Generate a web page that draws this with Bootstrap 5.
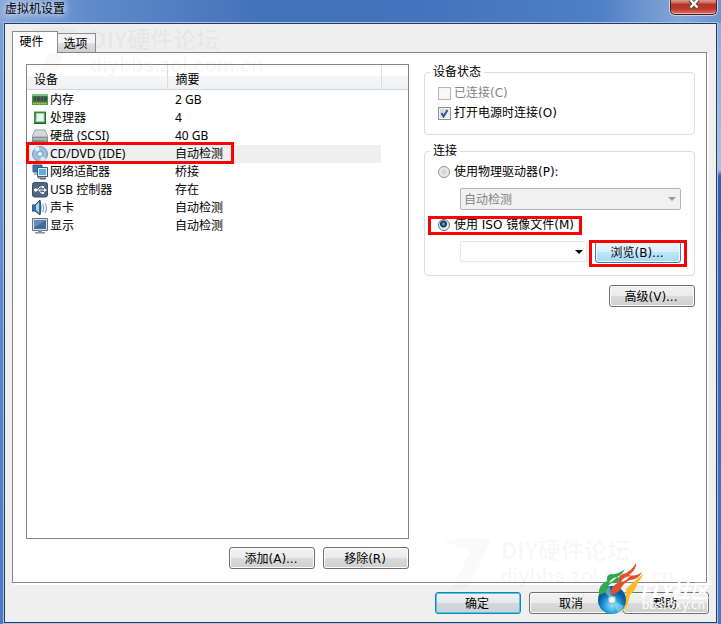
<!DOCTYPE html>
<html lang="zh-CN">
<head>
<meta charset="utf-8">
<meta name="viewport" content="width=device-width, initial-scale=1">
<title>虚拟机设置</title>
<link href="https://cdn.jsdelivr.net/npm/bootstrap@5.3.0/dist/css/bootstrap.min.css" rel="stylesheet">
<style>
  body { font: 12px/18px "DejaVu Sans", "Noto Sans CJK SC", sans-serif; color: #000; background: #4676bd; }
  .win { min-height: 100vh; padding: 0 4px 1px;
    background: linear-gradient(90deg, #86a9da 0, #5f8bcb 90px, #4472b9 260px, #4273bc 420px, #4e80c6 600px, #86a6d6 680px, #6d95cd 100%) 0 0 / 100% 23px no-repeat,
      linear-gradient(180deg, #8aabdc 0, #a8c0e4 170px, #2f5fae 176px, #4a7ac2 100%) 100% 0 / 5px 100% no-repeat,
      linear-gradient(180deg, #7ea3d8 0, #5c88cc 50%, #4a7ac4 100%); }
  .title-bar { height: 23px; }
  .title-text { font: 12px/16px "Noto Sans CJK SC", sans-serif; padding-left: 1px; text-shadow: 0 0 6px #fff, 0 0 10px #dfeaf8; }
  .close-btn { width: 47px; height: 15px; border: 1px solid #4b1d22; border-top: 0; border-radius: 0 0 5px 5px;
    background: linear-gradient(#d99a90 0, #cc6a5c 3px, #b53424 4px, #bb3b2c 9px, #d97462 100%); box-shadow: 0 0 0 1px #c5d3ea, inset 0 -1px 0 #efb0a3; }
  .dialog { background: #efefef; border: 1px solid #243a5e; box-shadow: 0 0 0 1px #a9c4e6; padding: 7px 9px 7px 7px; }
  .tab-strip { height: 21px; z-index: 2; }
  .tab-btn { border: 1px solid #898c95; border-bottom: 0; width: 39px; height: 19px; padding: 2px 6px 0 4px; line-height: 17px; white-space: nowrap;
    background: linear-gradient(#f3f3f3 0 50%, #dfdfdf 50%, #cfcfcf); margin-left: -1px; }
  .tab-btn.active { width: 46px; height: 22px; margin: 0 0 -1px; padding: 0 7px 0 0; background: #fff; }
  .pane { border: 1px solid #85878f; background: #fff; box-shadow: 2px 2px 0 #fff; padding: 11px 11px 13px 13px; }
  .hw-side { flex: 0 1 383px; }
  .opt-side { flex: 1 1 271px; margin-left: 15px; }
  .hw-list { border: 1px solid #828790; background: #fff; margin-bottom: 8px; }
  .hw-table { width: 100%; table-layout: fixed; border-collapse: collapse; font-family: "Noto Sans", "Noto Sans CJK SC", sans-serif; }
  .hw-table th { height: 24px; padding: 6px 7px 0; line-height: 17px; font-weight: 400; border-right: 1px solid #dcdddf; border-bottom: 1px solid #d5d5d5;
    background: linear-gradient(#fff 0 45%, #f5f6f8 45%, #f0f1f3); }
  .hw-table th:last-child { border-right: 0; }
  .hw-table td { height: 18px; padding: 0 7px; line-height: 18px; white-space: nowrap; }
  .hw-table td:first-child { padding: 0 0 0 5px; }
  .hw-table tbody tr:first-child td { height: 19px; padding-top: 1px; }
  .picked td { background: #efefef; }
  .picked td:last-child { background: #fff; }
  .dev-icon { width: 16px; height: 16px; margin-right: 2px; flex: none; }
  .callout { position: absolute; border: 3px solid #f00; pointer-events: none; z-index: 3; }
  .callout-dev { left: -6px; top: -3px; width: 208px; height: 22px; }
  .callout-iso { left: -10px; top: 1px; width: 154px; height: 19px; }
  .callout-browse { left: -6px; top: -1px; right: -6px; height: 27px; }
  .group { border: 1px solid #d5dfe5; border-radius: 4px; padding: 3px 13px 0; margin-bottom: 9px; }
  .group legend { float: none; width: auto; font-size: 12px; line-height: 16px; margin: 0 0 0 -8px; padding: 0 3px; }
  .g-status { min-height: 71px; margin-bottom: 8px; }
  .g-conn { min-height: 133px; }
  .line { height: 20px; gap: 3px; }
  .line label { white-space: nowrap; }
  .muted { color: #838383; }
  .tick { appearance: none; width: 13px; height: 13px; margin: 0; flex: none; border: 1px solid #8e8f8f; background: linear-gradient(135deg, #cfd3d8, #fbfbfb) padding-box; box-shadow: inset 0 0 0 1px #f4f4f4; }
  .tick:disabled { border-color: #b8b8b8; background: #f8f8f8; }
  .tick:checked { background: url("data:image/svg+xml,%3Csvg xmlns='http://www.w3.org/2000/svg' viewBox='0 0 11 11'%3E%3Cpath d='M2.5 5l2 3.5L8.5 2' fill='none' stroke='%23344f96' stroke-width='2'/%3E%3C/svg%3E"), linear-gradient(135deg, #c9d0d9, #fbfbfb); }
  .dot { appearance: none; width: 12px; height: 12px; margin: 0 1px 0 0; flex: none; border: 1px solid #8e8f8f; border-radius: 50%; background: radial-gradient(#c9cccf, #eee 65%, #fff); }
  .dot:checked { border-color: #5c6f80; background: radial-gradient(circle at 45% 40%, #6fd0f0 0, #16537c 2px, #0d2f4d 3px, #e3eaf0 4px, #fff); }
  .pick { appearance: none; width: 100%; height: 22px; border: 1px solid #b4b4b4; border-radius: 2px; padding: 2px 3px 0; line-height: 18px; color: #838383; background: #f1f1f1; opacity: 1; }
  .pick-wrap { position: relative; margin: 6px 0 5px 22px; }
  .arrow { position: absolute; right: 5px; top: 9px; border: 4px solid transparent; border-top-color: #9a9a9a; border-bottom: 0; pointer-events: none; }
  .iso-row { margin: 6px 0 0 22px; gap: 8px; }
  .iso-pick { position: relative; flex: 1 1 126px; }
  .iso-pick .pick { background: #fff; border-color: #e3e9ef; height: 21px; display: block; }
  .iso-pick .arrow { border-top-color: #000; right: 4px; }
  .push { width: 86px; height: 22px; padding: 2px 2px 0 0; line-height: 18px; border: 1px solid #707070; border-radius: 3px; color: #000;
    background: linear-gradient(#f3f3f3 0, #ebebeb 50%, #dbdbdb 50%, #cfcfcf); box-shadow: inset 0 0 0 1px #fbfbfb; white-space: nowrap; }
  .push-default { border-color: #2c7ca8; background: linear-gradient(#f0f2f3 0, #e4e8eb 50%, #d2d9de 50%, #cbd2d7); box-shadow: inset 0 0 0 1px #3fcdf5; }
  .push-hot { border-color: #3c7fb1; background: linear-gradient(#eaf6fd 0, #d9f0fc 50%, #bee6fd 50%, #a7d9f5); box-shadow: inset 0 0 0 1px #f0faff; }
  .footer-row { padding: 9px 0 1px; margin-right: -2px; }
  .ghost { position: absolute; pointer-events: none; color: rgba(0, 0, 0, .035); white-space: nowrap; font: 700 23px/27px "Noto Sans CJK SC", sans-serif; z-index: 1; }
  .ghost-url { font: 700 20px/26px "Liberation Sans", sans-serif; }
  .ghost-top { left: 22px; top: 25px; gap: 8px; }
  .ghost-low { right: 47px; bottom: 32px; gap: 4px; }
  .ghost svg { width: 60px; height: 56px; fill: currentColor; opacity: .5; }
  .brand { position: absolute; right: 12px; bottom: 7px; z-index: 4; pointer-events: none; color: #fff; }
  .brand svg { width: 52px; height: 54px; }
  .brand-text { margin: 18px 0 0 -9px; font: italic 700 19px/18px "Noto Sans CJK SC", sans-serif; }
  .brand-url { font: 12px/12px "DejaVu Sans", sans-serif; margin-left: -7px; }
</style>
<script src="https://cdn.jsdelivr.net/npm/bootstrap@5.3.0/dist/js/bootstrap.bundle.min.js"></script>
</head>
<body>
<div class="win d-flex flex-column position-relative">
  <header class="title-bar d-flex justify-content-between align-items-start">
    <span class="title-text">虚拟机设置</span>
    <button type="button" class="close-btn d-flex justify-content-center p-0" aria-label="关闭">
      <svg width="14" height="10" viewBox="0 0 14 10"><path d="M3 0l8 8M11 0L3 8" stroke="#5b4a54" stroke-width="4"/><path d="M3.500 0l7 7.500M10.500 0l-7 7.500" stroke="#fff" stroke-width="2.200"/></svg>
    </button>
  </header>

  <main class="dialog flex-grow-1 d-flex flex-column">
    <div class="tab-strip d-flex align-items-end position-relative" role="tablist">
      <button type="button" class="tab-btn active" role="tab" aria-selected="true">硬件</button>
      <button type="button" class="tab-btn" role="tab" aria-selected="false">选项</button>
    </div>
    <section class="pane d-flex flex-grow-1">
      <div class="hw-side d-flex flex-column">
        <div class="hw-list flex-grow-1">
          <table class="hw-table">
            <colgroup><col style="width:37%"><col style="width:56%"><col></colgroup>
            <thead><tr><th scope="col">设备</th><th scope="col">摘要</th><th></th></tr></thead>
            <tbody>
              <tr><td><div class="d-flex align-items-center"><svg class="dev-icon" viewBox="0 0 16 16"><path d="M0 2h16v11H0z" fill="#3d9a45"/><path d="M0 2h16v2H0z" fill="#74c47a"/><path d="M1.500 4.500h3v5h-3zM5 4.500h3v5H5zM8.500 4.500h3v5h-3zM12 4.500h3v5h-3z" fill="#444b4e"/><path d="M1 11.500h14" stroke="#e8b04a" stroke-width="1.500" stroke-dasharray="1.500 .5"/></svg>内存</div></td><td>2 GB</td><td></td></tr>
              <tr><td><div class="d-flex align-items-center"><svg class="dev-icon" viewBox="0 0 16 16"><path d="M2 1.500h12v12.500H2z" fill="#2f9045"/><path d="M4.500 3.500h7.500v8H4z" fill="#eef3ee" stroke="#a9cfae"/><path d="M2 13.500h12M13.500 2v12" stroke="#186a2b"/></svg>处理器</div></td><td>4</td><td></td></tr>
              <tr><td><div class="d-flex align-items-center"><svg class="dev-icon" viewBox="0 0 16 16"><path d="M3 2h10l3 7H0z" fill="#d4d9dd" stroke="#9aa0a6"/><path d="M0 9h16v5H0z" fill="#858d94"/><path d="M1 10h14v2H1z" fill="#b0b7bd"/><path d="M12 11h2v2h-2z" fill="#68d866"/></svg>硬盘 (SCSI)</div></td><td>40 GB</td><td></td></tr>
              <tr class="picked"><td><div class="d-flex align-items-center position-relative"><svg class="dev-icon" viewBox="0 0 16 16"><circle cx="8" cy="8" r="7.500" fill="#9fc0e2" stroke="#7395b8"/><path d="M8 8L2 3a8 8 0 0 1 5-2.500zM8 8l6 5a8 8 0 0 1-5 2.500z" fill="#deebf8"/><circle cx="8" cy="8" r="3" fill="#c3d9ef" stroke="#7c9fc5"/><circle cx="8" cy="8" r="1.200" fill="#fff"/></svg>CD/DVD (IDE)<span class="callout callout-dev"></span></div></td><td>自动检测</td><td></td></tr>
              <tr><td><div class="d-flex align-items-center"><svg class="dev-icon" viewBox="0 0 16 16"><path d="M1 1h9v7H1z" fill="#2d7cb8" stroke="#4b5a69"/><path d="M2 10h4v4h3" fill="none" stroke="#4a6d8c"/><path d="M5.500 4.500h10v8h-10z" fill="#58aee6"/><path d="M5.500 3.500h10v9h-10z" fill="none" stroke="#41576b"/><path d="M6.500 4.500h8v7h-8z" fill="none" stroke="#e8f0f6"/><path d="M8 14.500h6" stroke="#59697a" stroke-width="2"/></svg>网络适配器</div></td><td>桥接</td><td></td></tr>
              <tr><td><div class="d-flex align-items-center"><svg class="dev-icon" viewBox="0 0 16 16"><rect x=".5" y=".5" width="15" height="14.500" rx="2" fill="#4f6780" stroke="#3b5066"/><path d="M3 8h10M5 8l3-3h2M7 8l2 3h2" fill="none" stroke="#fff"/><circle cx="3.500" cy="8" r="1.700" fill="#fff"/><path d="M12 6l3 2-3 2zM10 4h2v2h-2zM10 10h2v2h-2z" fill="#fff"/></svg>USB 控制器</div></td><td>存在</td><td></td></tr>
              <tr><td><div class="d-flex align-items-center"><svg class="dev-icon" viewBox="0 0 16 16"><path d="M0 5h3l5-5q2 8 0 15L3 11H0z" fill="#3f6f9f" stroke="#2b4d73"/><path d="M4 5l3-3v11l-3-3z" fill="#a9d3f2"/><path d="M10.500 4q2.500 4 0 8M13 3q3 5 0 10" fill="none" stroke="#8eaaca" stroke-width="1.300"/></svg>声卡</div></td><td>自动检测</td><td></td></tr>
              <tr><td><div class="d-flex align-items-center"><svg class="dev-icon" viewBox="0 0 16 16"><path d="M.5 .5h15v12H.5z" fill="#dce3e9" stroke="#66737f"/><path d="M2 2h12v9H2z" fill="#41699e"/><path d="M2 2h12l-12 8z" fill="#6189bb"/><path d="M6 12.500h4v1.500H6zM3 14h10v1.500H3z" fill="#87939d"/></svg>显示</div></td><td>自动检测</td><td></td></tr>
            </tbody>
          </table>
        </div>
        <div class="d-flex justify-content-end gap-2">
          <button type="button" class="push">添加(A)...</button>
          <button type="button" class="push">移除(R)</button>
        </div>
      </div>

      <div class="opt-side">
        <fieldset class="group g-status">
          <legend>设备状态</legend>
          <div class="line d-flex align-items-center"><input class="tick" type="checkbox" id="connected" disabled><label for="connected" class="muted">已连接(C)</label></div>
          <div class="line d-flex align-items-center"><input class="tick" type="checkbox" id="poweron" checked><label for="poweron">打开电源时连接(O)</label></div>
        </fieldset>
        <fieldset class="group g-conn">
          <legend>连接</legend>
          <div class="line d-flex align-items-center"><input class="dot" type="radio" name="src" id="physical"><label for="physical">使用物理驱动器(P):</label></div>
          <div class="pick-wrap"><select class="pick d-block" aria-label="物理驱动器" disabled><option>自动检测</option></select><span class="arrow"></span></div>
          <div class="line d-flex align-items-center position-relative"><input class="dot" type="radio" name="src" id="iso" checked><label for="iso">使用 ISO 镜像文件(M)</label><span class="callout callout-iso"></span></div>
          <div class="iso-row d-flex">
            <div class="iso-pick"><select class="pick" aria-label="ISO 镜像文件"><option></option></select><span class="arrow"></span></div>
            <div class="position-relative"><button type="button" class="push push-hot">浏览(B)...</button><span class="callout callout-browse"></span></div>
          </div>
        </fieldset>
        <div class="text-end"><button type="button" class="push">高级(V)...</button></div>
      </div>
    </section>

    <footer class="footer-row d-flex justify-content-end gap-2">
      <button type="button" class="push push-default">确定</button>
      <button type="button" class="push">取消</button>
      <button type="button" class="push">帮助</button>
    </footer>
  </main>

  <div class="ghost ghost-top d-flex" aria-hidden="true"><svg viewBox="0 0 60 56"><path d="M6 6q26-8 48-2L32 50 14 54 34 14z"/></svg><div>DIY硬件论坛<div class="ghost-url">diybbs.zol.com.cn</div></div></div>
  <div class="ghost ghost-low d-flex" aria-hidden="true"><svg viewBox="0 0 60 56"><path d="M6 6q26-8 48-2L32 50 14 54 34 14z"/></svg><div>DIY硬件论坛<div class="ghost-url">diybbs.zol.com.cn</div></div></div>
  <div class="brand d-flex" aria-hidden="true">
    <svg viewBox="0 0 52 54">
      <defs><radialGradient id="disc" cx=".5" cy=".7"><stop offset="0" stop-color="#8fe3fa"/><stop offset=".6" stop-color="#1d9ad6"/><stop offset="1" stop-color="#0b5c9f"/></radialGradient></defs>
      <path d="M29 26Q36 19 46 11Q44 17 41 19Q39 27 33 32Q31 44 24 51Q30 38 29 26z" fill="#f8bd25"/>
      <circle cx="15" cy="37" r="14" fill="url(#disc)"/>
      <path d="M15 37L6 27a14 14 0 0 1 7-3zM15 37l12 6a14 14 0 0 1-6 7z" fill="#a5e5fa" opacity=".5"/>
      <circle cx="15" cy="37" r="4" fill="#d9edf6" stroke="#83aebe"/><circle cx="15" cy="37" r="1.500" fill="#fff"/>
      <path d="M2 31Q1 22 10 18Q9 12 14 11Q21 12 28 6Q25 12 20 14Q23 16 27 15Q21 21 15 20Q10 22 10 27Q7 32 2 31z" fill="#2fa84a"/>
      <path d="M12 20Q14 15 20 14Q17 18 12 20z" fill="#f4fbf4"/>
      <path d="M13 31Q14 23 22 19Q20 13 26 11Q34 9 39 0Q40 6 32 12Q39 14 45 9Q41 17 33 17Q26 20 23 27Q19 32 13 31z" fill="#e4502b"/>
      <path d="M24 19Q26 14 33 13Q30 18 24 19z" fill="#fff4ee"/>
    </svg>
    <div><div class="brand-text">FLY社区</div><div class="brand-url">bbs.6xy.cn</div></div>
  </div>
</div>
</body>
</html>
